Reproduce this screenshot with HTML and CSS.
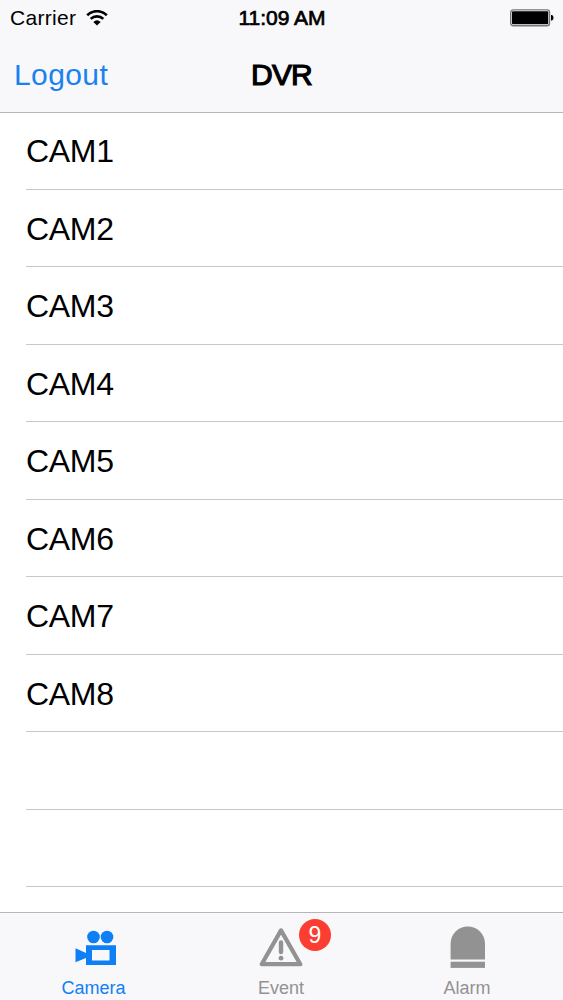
FILE: index.html
```html
<!DOCTYPE html>
<html lang="en">
<head>
<meta charset="UTF-8">
<meta name="viewport" content="width=device-width, initial-scale=1.0">
<title>DVR</title>
<link rel="stylesheet" href="styles.css">
</head>
<body>
<header class="top">
    <div class="status-bar">
        <div class="carrier">
            <span>Carrier</span>
            <svg class="wifi" width="22" height="16" viewBox="0 0 22 16" fill="none" stroke="#000" stroke-width="2.7">
                <path d="M1.2 5.2 A14 14 0 0 1 20.8 5.2"/>
                <path d="M4.7 8.9 A9 9 0 0 1 17.3 8.9"/>
                <path d="M7.3 12 Q11 8.6 14.7 12 L11 15.6 Z" fill="#000" stroke="none"/>
            </svg>
        </div>
        <div class="time">11:09 AM</div>
        <svg class="battery" width="44" height="18" viewBox="0 0 44 18">
            <rect x="0.7" y="0.9" width="38.8" height="15.8" rx="2.5" fill="#fff" stroke="#77777a" stroke-width="1.4"/>
            <rect x="2" y="2.3" width="36.2" height="13" rx="1" fill="#000"/>
            <path d="M41 6 h1 q1.5 0.5 1.5 2.8 t-1.5 2.8 h-1 Z" fill="#000"/>
        </svg>
    </div>
    <div class="nav-bar">
        <a class="logout">Logout</a>
        <h1 class="title">DVR</h1>
    </div>
</header>
<ul class="cameras">
    <li class="row">CAM1</li>
    <li class="row">CAM2</li>
    <li class="row">CAM3</li>
    <li class="row">CAM4</li>
    <li class="row">CAM5</li>
    <li class="row">CAM6</li>
    <li class="row">CAM7</li>
    <li class="row">CAM8</li>
    <li class="row"></li>
    <li class="row"></li>
</ul>
<nav class="tab-bar">
    <a class="tab active">
        <svg class="icon" width="46" height="44" viewBox="-4 0 46 44" fill="currentColor">
            <circle cx="18.5" cy="12" r="6.3"/>
            <circle cx="32" cy="12" r="6.3"/>
            <path fill-rule="evenodd" d="M11 20.2 h30 v19.8 h-30 Z M17 25 v10.5 h17.5 v-10.5 Z"/>
            <path d="M0.5 23.2 L11 28 V33 L0.5 37.2 Z"/>
        </svg>
        <span class="label">Camera</span>
    </a>
    <a class="tab">
        <span class="icon-box">
            <svg class="icon" width="44" height="44" viewBox="0 0 44 44" fill="none" stroke="currentColor">
                <path d="M22 5.4 L41.3 39.2 H2.7 Z" stroke-width="4.2" stroke-linejoin="round"/>
                <path d="M22 17.5 V27" stroke-width="4.4" stroke-linecap="round"/>
                <circle cx="22" cy="33.2" r="2.4" fill="currentColor" stroke="none"/>
            </svg>
            <span class="badge">9</span>
        </span>
        <span class="label">Event</span>
    </a>
    <a class="tab">
        <svg class="icon" width="36" height="44" viewBox="0 0 36 44" fill="currentColor">
            <path d="M1.6 34.5 V18.5 A17.2 17 0 0 1 36 18.5 V34.5 Z"/>
            <rect x="1.6" y="36.7" width="34.4" height="6.2"/>
        </svg>
        <span class="label">Alarm</span>
    </a>
</nav>
</body>
</html>
```
FILE: styles.css
```css
* {
    box-sizing: border-box;
}
body {
    margin: 0;
    height: 1000px;
    display: flex;
    flex-direction: column;
    overflow: hidden;
    background-color: #fff;
    color: #000;
    font-family: "Liberation Sans", Arial, sans-serif;
}
.top {
    height: 113px;
    background-color: #f8f7fa;
    border-bottom: 1px solid #b6b6b9;
}
.status-bar {
    display: grid;
    grid-template-columns: 1fr auto 1fr;
    align-items: center;
    height: 36px;
    padding: 0 9px 0 10px;
    font-size: 21px;
}
.carrier {
    display: flex;
    align-items: center;
    gap: 10px;
    letter-spacing: 0.3px;
}
.time {
    font-size: 21px;
    -webkit-text-stroke: 0.7px #000;
}
.battery {
    justify-self: end;
}
.nav-bar {
    display: grid;
    grid-template-columns: 1fr auto 1fr;
    align-items: center;
    height: 77px;
    padding: 0 14px;
}
.logout {
    font-size: 30px;
    letter-spacing: 0.4px;
    color: #1a82f0;
}
.title {
    margin: 0;
    font-size: 30px;
    font-weight: normal;
    letter-spacing: -0.8px;
    -webkit-text-stroke: 1.2px #000;
}
.cameras {
    flex: 1;
    margin: -1px 0 0;
    padding: 0 0 0 26px;
    list-style: none;
    overflow: hidden;
}
.row {
    height: 77.5px;
    border-bottom: 1px solid #c8c7cc;
    font-size: 32px;
    line-height: 78px;
    letter-spacing: -0.3px;
}
.tab-bar {
    display: grid;
    grid-template-columns: 187px 188px 184px;
    height: 88px;
    background-color: #f8f7fa;
    border-top: 1px solid #b6b6b9;
}
.tab {
    display: flex;
    flex-direction: column;
    align-items: center;
    padding-top: 12px;
    color: #929292;
}
.active {
    color: #0f7ff5;
}
.icon {
    display: block;
}
.icon-box {
    position: relative;
}
.label {
    margin-top: 9px;
    font-size: 18px;
    line-height: 20px;
}
.badge {
    position: absolute;
    left: 40px;
    top: -6px;
    width: 32px;
    height: 32px;
    border-radius: 50%;
    background-color: #fc3d32;
    color: #fff;
    font-size: 23px;
    line-height: 32px;
    text-align: center;
}
```
